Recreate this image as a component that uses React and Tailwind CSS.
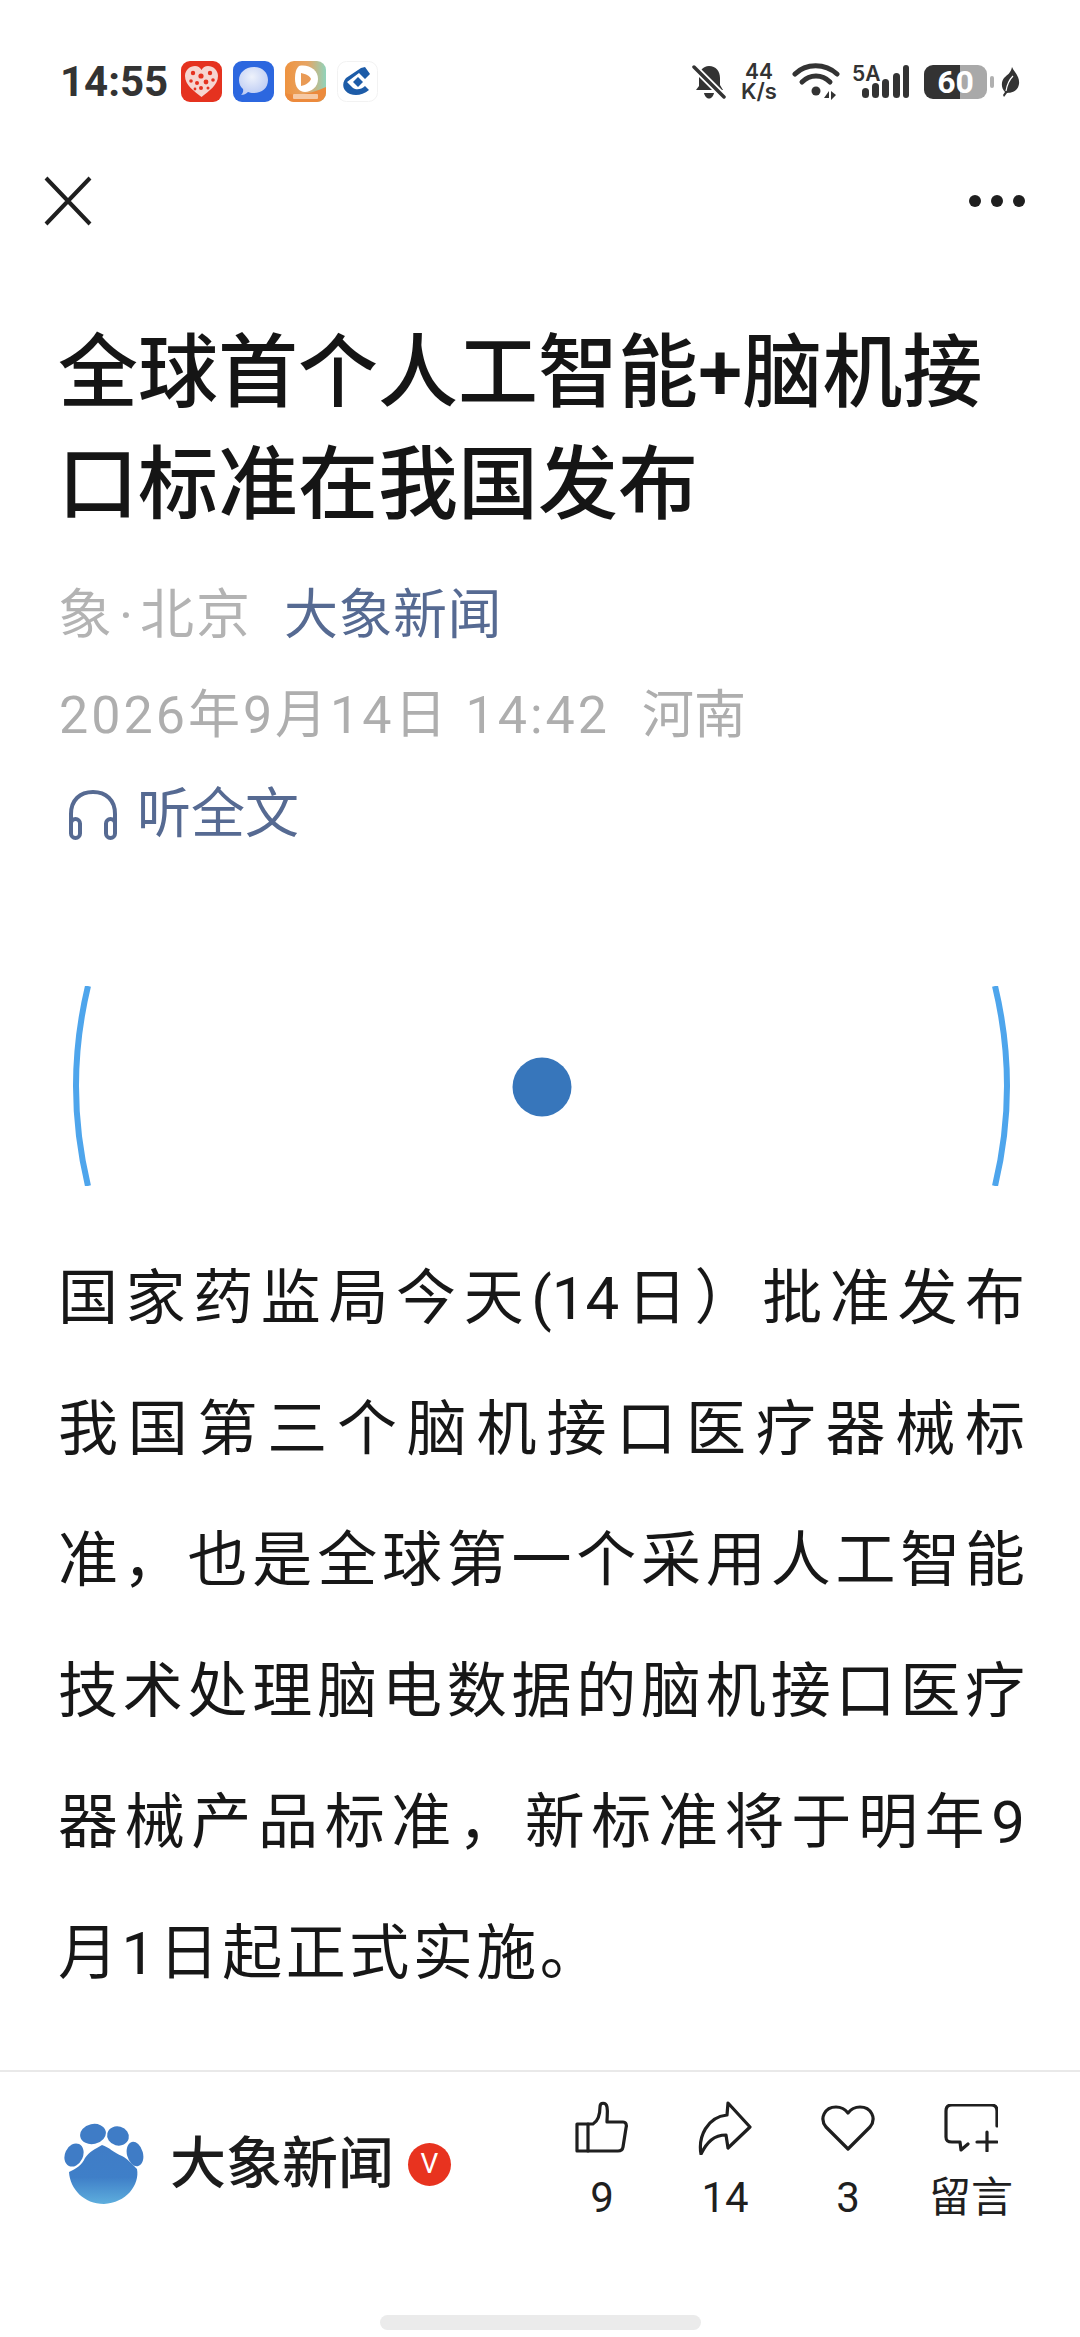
function AppIcons() {
  return (
    <div className="flex items-center gap-[11px] ml-[13px]">
      <svg width="41" height="41" viewBox="0 0 41 41">
        <rect width="41" height="41" rx="9" fill="#e5321f" />
        <path d="M20.500 36 C13 30 4 24 4 15 C4 9 9 5 14 5 C17 5 19 6.500 20.500 9 C22 6.500 24 5 27 5 C32 5 37 9 37 15 C37 24 28 30 20.500 36Z" fill="#f6d5d0" />
        <g fill="#e5321f">
          <circle cx="12" cy="12" r="2.200" /><circle cx="20" cy="15" r="2.600" /><circle cx="29" cy="12" r="2.200" />
          <circle cx="10" cy="20" r="1.800" /><circle cx="16" cy="22" r="2" /><circle cx="25" cy="21" r="2.400" /><circle cx="32" cy="19" r="1.800" />
          <circle cx="20" cy="27" r="2" /><circle cx="14" cy="28" r="1.400" /><circle cx="27" cy="27" r="1.500" />
        </g>
      </svg>
      <svg width="41" height="41" viewBox="0 0 41 41">
        <defs>
          <radialGradient id="msg" cx="0.45" cy="0.35" r="0.7"><stop offset="0" stopColor="#eef2fb" /><stop offset="1" stopColor="#b9c9f3" /></radialGradient>
        </defs>
        <rect width="41" height="41" rx="9" fill="#2c67df" />
        <path d="M21 6 C30 6 35 12 35 19 C35 27 29 32 21 32 C18 32 16 31.500 15 31 C13 33 11 34 8 34 C10 32 10.500 30 10 28 C7.500 26 6 23 6 19 C6 12 12 6 21 6Z" fill="url(#msg)" />
      </svg>
      <svg width="41" height="41" viewBox="0 0 41 41">
        <defs>
          <linearGradient id="vid" x1="0" y1="0" x2="1" y2="0"><stop offset="0" stopColor="#ee9340" /><stop offset="0.55" stopColor="#e6a565" /><stop offset="1" stopColor="#8fd3bb" /></linearGradient>
        </defs>
        <rect width="41" height="41" rx="9" fill="url(#vid)" />
        <path d="M0 32 C12 36 28 32 41 26 V32 A9 9 0 0 1 32 41 H9 A9 9 0 0 1 0 32Z" fill="#ec8a3c" />
        <path d="M14 5 C24 3 33 9 33 18 C33 26 26 31 20 31 C14 31 10 26 10 18 C10 12 11 8 14 5Z" fill="#fff" />
        <path d="M16 12 C21 13 25 15 26 18 C25 21 21 24 16 25Z" fill="#e99a55" />
        <rect x="8" y="33" width="25" height="5" rx="1" fill="#f6c9a4" />
      </svg>
      <svg width="41" height="41" viewBox="0 0 41 41">
        <rect x="0.500" y="0.500" width="40" height="40" rx="9" fill="#fff" stroke="#f2f2f2" />
        <path d="M24 7 L9 17 C4 23 6 30 13 33 C19 35 26 34 32 29 L28 25 C24 29 19 29 16 27 L10 21 L22 12 L28 18 L33 13 L28 6Z" fill="#1d5ca8" />
        <path d="M21 16 L26 21 L21 26 L16 21Z" fill="#1d5ca8" />
      </svg>
    </div>
  );
}

function StatusRight() {
  const c = "#333333";
  return (
    <div className="flex items-center">
      <svg width="34" height="36" viewBox="0 0 34 36" className="mr-[14px]">
        <path d="M17 2 C24 2 28 7 28 14 V21 L31 26 H4 L7 22 L7 13 C7 7 11 2 17 2Z" fill={c} />
        <path d="M12 29 H22 C21 33 19 34.500 17 34.500 C15 34.500 13 33 12 29Z" fill={c} />
        <path d="M3 4 L31 32" stroke="#fff" strokeWidth="7" />
        <path d="M2 3 L32 33" stroke={c} strokeWidth="3.500" strokeLinecap="round" />
      </svg>
      <div className="flex flex-col items-center w-[38px] mr-[14px] font-['Inter',sans-serif] font-semibold text-[#333333]">
        <span className="text-[21px] leading-[18px]">44</span>
        <span className="text-[22px] leading-[20px]">K/s</span>
      </div>
      <svg width="48" height="38" viewBox="0 0 48 38" className="mr-[12px]">
        <path d="M3 11 C14 0 33 0 45 11" fill="none" stroke={c} strokeWidth="5" strokeLinecap="round" />
        <path d="M10 19 C18 11 30 11 38 19" fill="none" stroke={c} strokeWidth="5" strokeLinecap="round" />
        <circle cx="24" cy="28" r="4.500" fill={c} />
        <path d="M32 35 L37 28 V35Z M39 28 L44 32 L39 37Z" fill={c} />
      </svg>
      <div className="relative w-[58px] h-[36px] mr-[14px]">
        <span className="absolute left-0 top-0 font-['Inter',sans-serif] font-semibold text-[21px] leading-[19px] text-[#333333]">5A</span>
        <svg width="58" height="36" viewBox="0 0 58 36" className="absolute left-0 top-0">
          <rect x="10" y="24" width="7" height="10" rx="3.500" fill={c} />
          <rect x="20" y="19" width="7" height="15" rx="3.500" fill={c} />
          <rect x="30" y="15" width="7" height="19" rx="3.500" fill={c} />
          <rect x="41" y="9" width="7" height="25" rx="3.500" fill={c} />
          <rect x="51" y="1" width="6" height="33" rx="3" fill={c} />
        </svg>
      </div>
      <div className="flex items-center justify-center w-[63px] h-[34px] rounded-[9px] bg-[linear-gradient(90deg,#333333_36px,#a9a9a9_36px)]">
        <span className="font-['Roboto',sans-serif] font-bold text-[32px] leading-none text-white">60</span>
      </div>
      <div className="w-[4px] h-[12px] rounded-[2px] bg-[#b0b0b0] ml-[3px] mr-[7px]" />
      <svg width="19" height="30" viewBox="0 0 19 30">
        <path d="M11 0 C13 5 19 9 18 17 C17 24 11 26 6 26 L3 30 L2 28 L4 25 C0 21 0 15 3 11 C6 8 10 6 11 0Z" fill={c} />
        <path d="M5 24 C6 18 8 13 12 9" fill="none" stroke="#fff" strokeWidth="1.200" />
      </svg>
    </div>
  );
}

function Arcs() {
  return (
    <svg width="1080" height="200" viewBox="0 0 1080 200" className="block">
      <path d="M88 0 Q64 100 88 200" fill="none" stroke="#4ea5ec" strokeWidth="6" />
      <path d="M995 0 Q1019 100 995 200" fill="none" stroke="#4ea5ec" strokeWidth="6" />
      <circle cx="542" cy="101" r="29.500" fill="#3776bb" />
    </svg>
  );
}

function Paw() {
  return (
    <svg width="80" height="82" viewBox="0 0 80 82" className="shrink-0">
      <defs>
        <linearGradient id="paw" x1="0" y1="0" x2="0" y2="1"><stop offset="0" stopColor="#3f7cc6" /><stop offset="0.55" stopColor="#3f7fc8" /><stop offset="1" stopColor="#5eaedd" /></linearGradient>
      </defs>
      <ellipse cx="29" cy="11" rx="13" ry="10" fill="#3f7cc6" transform="rotate(-12 29 11)" />
      <ellipse cx="54" cy="13" rx="11" ry="9.500" fill="#3f7cc6" transform="rotate(15 54 13)" />
      <ellipse cx="10" cy="32" rx="9" ry="12" fill="#3f7cc6" transform="rotate(25 10 32)" />
      <ellipse cx="71" cy="31" rx="8" ry="12.500" fill="#3f7cc6" transform="rotate(-15 71 31)" />
      <path d="M38 22 C45 24 50 30 58 33 C64 36 69 42 73 46 C76 62 62 80 40 81 C20 81 6 66 5 49 C12 46 18 42 21 35 C25 29 31 26 38 22Z" fill="url(#paw)" />
    </svg>
  );
}

function Action({ icon, label, clip }) {
  return (
    <div className="flex flex-col items-center w-[100px]">
      <div className="h-[56px] flex items-center justify-center">{icon}</div>
      <div className={clip
        ? "mt-[14px] h-[52px] overflow-hidden text-[42px] leading-[56px] text-[#1f1f1f] text-center whitespace-nowrap"
        : "mt-[14px] h-[56px] text-[42px] leading-[56px] text-[#1f1f1f] text-center whitespace-nowrap"}>{label}</div>
    </div>
  );
}

const Thumb = (
  <svg width="54" height="54" viewBox="0 0 54 54" fill="none" stroke="#1f1f1f" strokeWidth="3.200" strokeLinejoin="round" strokeLinecap="round">
    <path d="M2 23 H18 C23 20 25 15 25 6 C25 1 31 1 32 6 C33 11 32 15 32 21 H48 C51 21 52 24 51 27 L48 46 C47.500 49 46 50 43 50 H2Z" />
    <path d="M13 23 V50" />
  </svg>
);
const Share = (
  <svg width="54" height="54" viewBox="0 0 54 54" fill="none" stroke="#1f1f1f" strokeWidth="3.200" strokeLinejoin="round" strokeLinecap="round">
    <path d="M30 2 L52 26 L30 47 L28 34 C16 34 9 41 3 53 C0 36 9 16 29 14Z" />
  </svg>
);
const Heart = (
  <svg width="54" height="46" viewBox="0 0 54 46" fill="none" stroke="#1f1f1f" strokeWidth="3.200" strokeLinejoin="round">
    <path d="M27 44 L5 22 C-2 13 4 2 15 2 C20 2 24 4 27 8 C30 4 34 2 39 2 C50 2 56 13 49 22Z" />
  </svg>
);
const Comment = (
  <svg width="54" height="48" viewBox="0 0 54 48" fill="none" stroke="#1f1f1f" strokeWidth="3.200" strokeLinecap="round" strokeLinejoin="round">
    <path d="M53 22 V7 C53 3 51 1 47 1 H8 C4 1 2 3 2 7 V33 C2 37 4 38 8 38 H16 L17 46 L24 40" />
    <path d="M43 28 V47 M33 38 H53" />
  </svg>
);

export default function App() {
  const body = [
    "国家药监局今天(14日）批准发布",
    "我国第三个脑机接口医疗器械标",
    "准，也是全球第一个采用人工智能",
    "技术处理脑电数据的脑机接口医疗",
    "器械产品标准，新标准将于明年9",
  ];
  return (
    <div className="relative w-[1080px] h-[2337px] overflow-hidden bg-white font-['Roboto','Noto_Sans_CJK_SC',sans-serif] text-[#1f1f1f]">
      <div className="flex items-center justify-between h-[41px] mt-[61px] pl-[60px] pr-[60px]">
        <div className="flex items-center">
          <span className="text-[42px] leading-none font-bold text-[#333333]">14:55</span>
          <AppIcons />
        </div>
        <StatusRight />
      </div>

      <div className="flex items-center justify-between h-[50px] mt-[74px] pl-[44px] pr-[55px]">
        <svg width="48" height="50" viewBox="0 0 48 50" fill="none" stroke="#1f1f1f" strokeWidth="4">
          <path d="M2 2 L46 48 M46 2 L2 48" />
        </svg>
        <div className="flex items-center gap-[10px]">
          <div className="w-[12px] h-[12px] rounded-full bg-[#1f1f1f]" />
          <div className="w-[12px] h-[12px] rounded-full bg-[#1f1f1f]" />
          <div className="w-[12px] h-[12px] rounded-full bg-[#1f1f1f]" />
        </div>
      </div>

      <h1 className="mt-[91px] pl-[58px] pr-[40px] text-[80px] leading-[112px] font-medium text-[#151515]">
        全球首个人工智能+脑机接口标准在我国发布
      </h1>

      <div className="mt-[40px] pl-[58px] flex items-center h-[70px] text-[54px] leading-[70px] whitespace-nowrap">
        <span className="text-[#b3b3b3]">象<span className="mx-[7px]">·</span><span className="tracking-[2px]">北京</span></span>
        <span className="ml-[32px] tracking-[0.500px] text-[#566a92]">大象新闻</span>
      </div>
      <div className="mt-[30px] pl-[59px] h-[70px] flex items-center text-[52px] leading-[70px] text-[#aeaeae] whitespace-nowrap tracking-[3px]">
        2026年9月14日 14:42
        <span className="ml-[32px] tracking-normal">河南</span>
      </div>
      <div className="mt-[29px] pl-[68px] h-[70px] flex items-center">
        <svg width="50" height="50" viewBox="0 0 50 50" fill="none" stroke="#566a92" strokeWidth="4">
          <path d="M3 34 V24 C3 10 12 2 25 2 C38 2 47 10 47 24 V34" />
          <rect x="3" y="29" width="9" height="19" rx="4.500" />
          <rect x="38" y="29" width="9" height="19" rx="4.500" />
        </svg>
        <span className="ml-[19px] text-[54px] leading-[70px] text-[#566a92]">听全文</span>
      </div>

      <div className="mt-[136px]"><Arcs /></div>

      <div className="mt-[47px] pl-[58px] pr-[55px] text-[60px] leading-[131px] text-[#171717]">
        {body.map((l) => (
          <div key={l} className="[text-align:justify] [text-align-last:justify] [text-justify:inter-character]">{l}</div>
        ))}
        <div className="tracking-[3.500px]">月1日起正式实施。</div>
      </div>

      <div className="mt-[51px] border-t-2 border-[#e9e9e9] flex items-start justify-between pl-[64px] pr-[60px] pt-[28px]">
        <div className="flex items-center mt-[23px]">
          <Paw />
          <span className="ml-[26px] text-[56px] leading-[80px] font-medium text-[#1c1c1c]">大象新闻</span>
          <span className="ml-[14px] w-[43px] h-[43px] rounded-full bg-[#e8331f] flex items-center justify-center text-[28px] leading-none text-white">V</span>
        </div>
        <div className="flex items-start gap-[23px] mr-[-1px]">
          <Action icon={Thumb} label="9" />
          <Action icon={Share} label="14" />
          <Action icon={Heart} label="3" />
          <Action icon={Comment} label="留言" clip />
        </div>
      </div>

      <div className="absolute left-[380px] top-[2315px] w-[321px] h-[15px] rounded-full bg-[#ebebeb]" />
    </div>
  );
}
